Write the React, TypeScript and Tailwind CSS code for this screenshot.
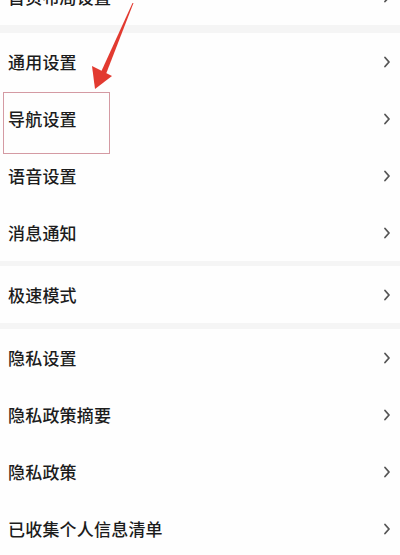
import React from "react";

type Row = { label: string } | { gap: string };

const rows: Row[] = [
  { label: "首页布局设置" },
  { gap: "h-2" },
  { label: "通用设置" },
  { label: "导航设置" },
  { label: "语音设置" },
  { label: "消息通知" },
  { gap: "h-[5px]" },
  { label: "极速模式" },
  { gap: "h-[6px]" },
  { label: "隐私设置" },
  { label: "隐私政策摘要" },
  { label: "隐私政策" },
  { label: "已收集个人信息清单" },
];

function Chevron() {
  return (
    <svg width="8" height="12" viewBox="0 0 8 12" fill="none">
      <path d="M2 1.5 L6 6 L2 10.5" stroke="#555" strokeWidth="1.8" strokeLinecap="round" strokeLinejoin="round" />
    </svg>
  );
}

export default function App() {
  return (
    <div
      className="relative w-[400px] h-[555px] overflow-hidden bg-[#fefefe]"
      style={{ fontFamily: '"Noto Sans CJK SC", "Noto Sans", sans-serif' }}
    >
      <div className="flex flex-col -mt-[32px]">
        {rows.map((row, i) =>
          "gap" in row ? (
            <div key={i} className={`${row.gap} bg-[#f5f5f5]`} />
          ) : (
            <div key={i} className="h-[57px] flex items-center justify-between pl-[8px] pr-[9px]">
              <span className="text-[17px] font-medium text-[#1c1c1c] tracking-[0.2px]">{row.label}</span>
              <Chevron />
            </div>
          )
        )}
      </div>

      {/* 标注框 */}
      <div className="absolute left-[3px] top-[92px] w-[107px] h-[62px] border border-[#d49aa3]" />

      {/* 箭头 */}
      <svg className="absolute left-0 top-0" width="400" height="555" viewBox="0 0 400 555">
        <polygon points="133.5,3 132.5,3 101,72 106,74" fill="#e23a30" />
        <polygon points="95,89 92,66 112,76" fill="#e23a30" />
      </svg>
    </div>
  );
}
